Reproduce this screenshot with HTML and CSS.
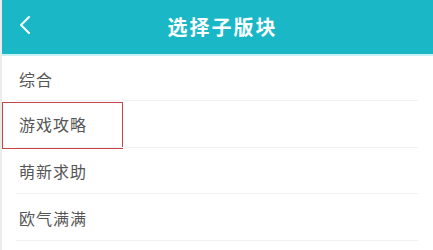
FILE: index.html
```html
<!DOCTYPE html>
<html lang="zh">

<head>
    <meta charset="UTF-8">
    <meta name="viewport" content="width=device-width, initial-scale=1.0">
    <title>选择子版块</title>
    <link rel="stylesheet" href="styles.css">
</head>

<body>
    <div class="page">
        <div class="header">
            <span class="back">
                <svg width="14" height="20" viewBox="0 0 14 20">
                    <path d="M11 2 L3 10 L11 18" fill="none" stroke="#fff" stroke-width="2" stroke-linecap="round" stroke-linejoin="round"/>
                </svg>
            </span>
            <span class="title">选择子版块</span>
        </div>
        <ul class="list">
            <li class="item first">综合</li>
            <li class="item selected">游戏攻略</li>
            <li class="item">萌新求助</li>
            <li class="item">欧气满满</li>
        </ul>
    </div>
</body>

</html>
```

FILE: styles.css
```css
* {
    box-sizing: border-box;
}

body {
    margin: 0;
    background-color: #ececec;
    font-family: "Noto Sans CJK SC", "Noto Sans", sans-serif;
}

.page {
    margin-left: 2px;
    min-height: 250px;
    background-color: #fff;
}

.header {
    position: relative;
    height: 56px;
    background-color: #1ab8c6;
    border-bottom: 2px solid #c9f1f4;
    display: flex;
    align-items: center;
    justify-content: center;
}

.back {
    position: absolute;
    left: 16px;
    top: 15px;
}

.title {
    color: #fff;
    font-size: 20px;
    font-weight: bold;
    letter-spacing: 2px;
    margin-top: -2px;
    margin-left: 10px;
}

.list {
    list-style-type: none;
    margin: 0;
    padding: 0;
}

.item {
    position: relative;
    height: 46.7px;
    padding-left: 17px;
    display: flex;
    align-items: center;
    font-size: 16px;
    color: #555;
    letter-spacing: 1px;
}

.first {
    height: 45px;
}

.item::after {
    content: "";
    position: absolute;
    left: 14px;
    right: 15px;
    bottom: 0;
    height: 1px;
    background-color: #f1f1f1;
}

.selected::before {
    content: "";
    position: absolute;
    left: 0;
    top: 1px;
    width: 119px;
    height: 45px;
    border: 1px solid #c8424a;
}
```
